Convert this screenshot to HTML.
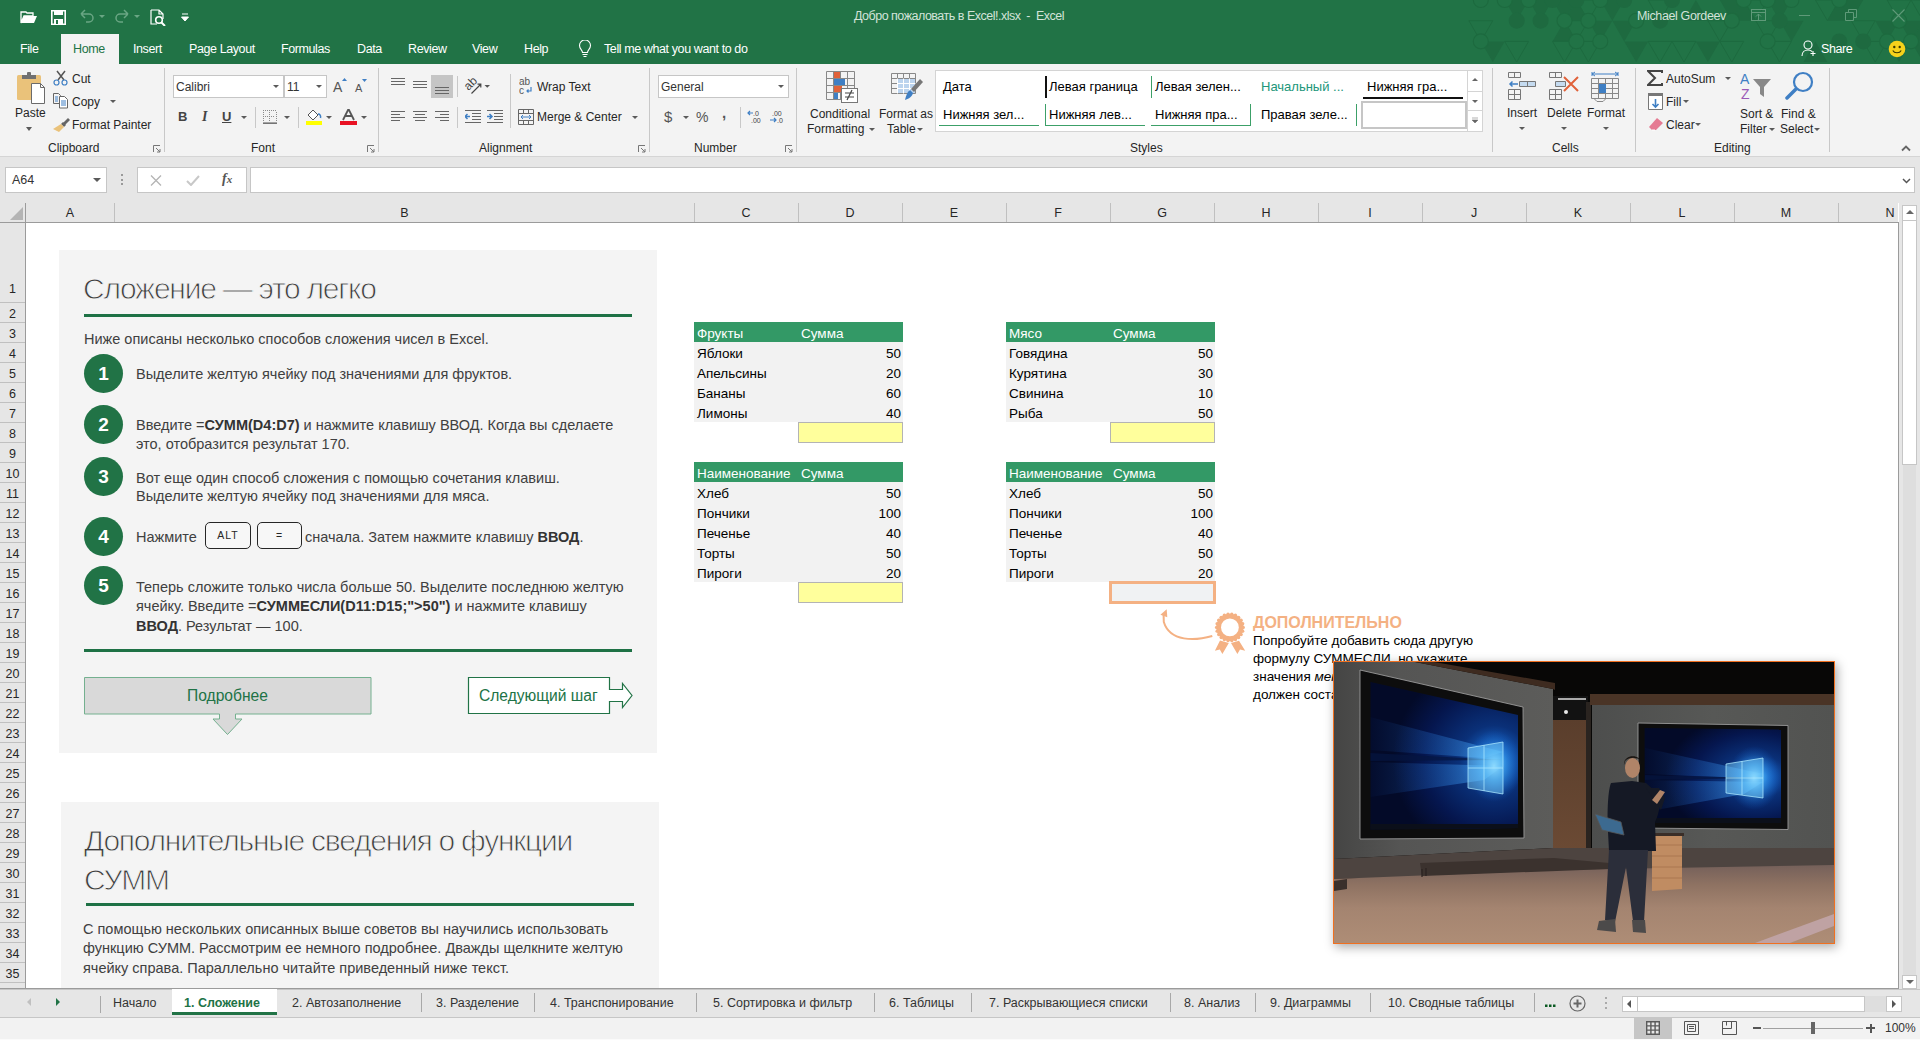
<!DOCTYPE html>
<html><head><meta charset="utf-8">
<style>
*{margin:0;padding:0;box-sizing:border-box}
html,body{width:1920px;height:1040px;overflow:hidden;background:#fff;font-family:"Liberation Sans",sans-serif;font-size:12px;color:#262626}
.a{position:absolute;white-space:nowrap}
#title{position:absolute;left:0;top:0;width:1920px;height:64px;background:#217346;overflow:hidden}
#ribbon{position:absolute;left:0;top:64px;width:1920px;height:93px;background:#f3f3f3;border-bottom:1px solid #d5d5d5}
#fbar{position:absolute;left:0;top:157px;width:1920px;height:46px;background:#e6e6e6}
.w{color:#fff}
.sep{position:absolute;width:1px;background:#c8c8c8}
.gl{position:absolute;top:141px;color:#262626;font-size:12px}
.dd{position:absolute;width:0;height:0;border-left:3px solid transparent;border-right:3px solid transparent;border-top:3px solid #5a5a5a}
.ch{top:206px;text-align:center;font-size:12.5px;color:#262626;height:16px}
.rh{left:0;width:25px;text-align:center;font-size:12.5px;color:#262626;height:18px;line-height:18px;padding-top:2px}
.tt{font-size:30px;letter-spacing:-1.25px;color:#3c3c3c;line-height:34px;-webkit-text-stroke:0.9px #f4f4f4}
.pt{font-size:14.5px;color:#404040;line-height:18px;padding-top:1px}
.pt b{color:#333}
.circ{width:39px;height:39px;border-radius:50%;background:#217346;color:#fff;font-size:19px;font-weight:bold;text-align:center;line-height:40px}
.key{height:27px;border:1.5px solid #262626;border-radius:5px;background:#f7f7f7;font-size:10.5px;text-align:center;line-height:24px;color:#262626;letter-spacing:1px}
.btxt{font-size:15.6px;color:#217346;line-height:20px}
.cl{font-size:13.5px;line-height:20px;color:#000;padding-top:2px}
.tab{top:996px;font-size:12.5px;color:#333;line-height:15px}
.box{position:absolute;background:#fff;border:1px solid #c6c6c6}
</style></head><body>
<div id="title">
<svg class="a" style="left:1430px;top:0" width="490" height="62" viewBox="0 0 490 62"><path d="M74.7 0.0L98.6 0.0L86.7 20.7Z" fill="#1e6a40"/><path d="M98.6 0.0L122.5 0.0L110.6 20.7Z" fill="#1e6a40"/><path d="M122.5 0.0L146.4 0.0L134.5 20.7Z" fill="#1e6a40"/><path d="M134.5 20.7L146.4 0.0L158.4 20.7Z" fill="#1e6a40"/><path d="M146.4 0.0L170.3 0.0L158.4 20.7Z" fill="none" stroke="#1d6a3f" stroke-width="1"/><path d="M170.3 0.0L194.2 0.0L182.3 20.7Z" fill="#1e6a40"/><path d="M218.1 0.0L242.0 0.0L230.1 20.7Z" fill="none" stroke="#1d6a3f" stroke-width="1"/><path d="M254.0 20.7L265.9 0.0L277.9 20.7Z" fill="#1e6a40"/><path d="M289.8 0.0L313.7 0.0L301.8 20.7Z" fill="#1e6a40"/><path d="M301.8 20.7L313.7 0.0L325.7 20.7Z" fill="#1e6a40"/><path d="M313.7 0.0L337.6 0.0L325.7 20.7Z" fill="none" stroke="#1d6a3f" stroke-width="1"/><path d="M337.6 0.0L361.5 0.0L349.6 20.7Z" fill="#1e6a40"/><path d="M385.4 0.0L409.3 0.0L397.4 20.7Z" fill="none" stroke="#1d6a3f" stroke-width="1"/><path d="M397.4 20.7L409.3 0.0L421.3 20.7Z" fill="#1e6a40"/><path d="M409.3 0.0L433.2 0.0L421.3 20.7Z" fill="#1e6a40"/><path d="M457.1 0.0L481.0 0.0L469.1 20.7Z" fill="none" stroke="#1d6a3f" stroke-width="1"/><path d="M481.0 0.0L504.9 0.0L493.0 20.7Z" fill="none" stroke="#1d6a3f" stroke-width="1"/><path d="M38.9 20.7L62.8 20.7L50.8 41.4Z" fill="none" stroke="#1d6a3f" stroke-width="1"/><path d="M122.5 41.4L134.5 20.7L146.4 41.4Z" fill="#1e6a40"/><path d="M134.5 20.7L158.4 20.7L146.4 41.4Z" fill="none" stroke="#1d6a3f" stroke-width="1"/><path d="M158.4 20.7L182.3 20.7L170.3 41.4Z" fill="#1e6a40"/><path d="M182.3 20.7L206.2 20.7L194.2 41.4Z" fill="#1e6a40"/><path d="M277.9 20.7L301.8 20.7L289.8 41.4Z" fill="none" stroke="#1d6a3f" stroke-width="1"/><path d="M325.7 20.7L349.6 20.7L337.6 41.4Z" fill="none" stroke="#1d6a3f" stroke-width="1"/><path d="M349.6 20.7L373.5 20.7L361.5 41.4Z" fill="#1e6a40"/><path d="M421.3 20.7L445.2 20.7L433.2 41.4Z" fill="none" stroke="#1d6a3f" stroke-width="1"/><path d="M445.2 20.7L469.1 20.7L457.1 41.4Z" fill="#1e6a40"/><path d="M469.1 20.7L493.0 20.7L481.0 41.4Z" fill="#1e6a40"/><path d="M481.0 41.4L493.0 20.7L504.9 41.4Z" fill="#1e6a40"/><path d="M493.0 20.7L516.9 20.7L504.9 41.4Z" fill="#1e6a40"/><path d="M50.8 41.4L74.7 41.4L62.8 62.1Z" fill="#1e6a40"/><path d="M74.7 41.4L98.6 41.4L86.7 62.1Z" fill="none" stroke="#1d6a3f" stroke-width="1"/><path d="M122.5 41.4L146.4 41.4L134.5 62.1Z" fill="none" stroke="#1d6a3f" stroke-width="1"/><path d="M146.4 41.4L170.3 41.4L158.4 62.1Z" fill="none" stroke="#1d6a3f" stroke-width="1"/><path d="M194.2 41.4L218.1 41.4L206.2 62.1Z" fill="#1e6a40"/><path d="M218.1 41.4L242.0 41.4L230.1 62.1Z" fill="none" stroke="#1d6a3f" stroke-width="1"/><path d="M242.0 41.4L265.9 41.4L254.0 62.1Z" fill="none" stroke="#1d6a3f" stroke-width="1"/><path d="M265.9 41.4L289.8 41.4L277.9 62.1Z" fill="#1e6a40"/><path d="M289.8 41.4L313.7 41.4L301.8 62.1Z" fill="none" stroke="#1d6a3f" stroke-width="1"/><path d="M337.6 41.4L361.5 41.4L349.6 62.1Z" fill="none" stroke="#1d6a3f" stroke-width="1"/><path d="M373.5 62.1L385.4 41.4L397.4 62.1Z" fill="#1e6a40"/><path d="M433.2 41.4L457.1 41.4L445.2 62.1Z" fill="none" stroke="#1d6a3f" stroke-width="1"/><path d="M457.1 41.4L481.0 41.4L469.1 62.1Z" fill="#1e6a40"/><path d="M481.0 41.4L504.9 41.4L493.0 62.1Z" fill="#1e6a40"/><path d="M493.0 62.1L504.9 41.4L516.9 62.1Z" fill="#1e6a40"/><circle cx="50.8" cy="0.0" r="7.5" fill="#217346" stroke="#1d6a3f" stroke-width="1.1"/><circle cx="74.7" cy="0.0" r="7.5" fill="#217346" stroke="#1d6a3f" stroke-width="1.1"/><circle cx="98.6" cy="0.0" r="7.5" fill="#217346" stroke="#1d6a3f" stroke-width="1.1"/><circle cx="122.5" cy="0.0" r="8" fill="#1e6a40"/><circle cx="146.4" cy="0.0" r="8" fill="#1e6a40"/><circle cx="170.3" cy="0.0" r="7.5" fill="#217346" stroke="#1d6a3f" stroke-width="1.1"/><circle cx="194.2" cy="0.0" r="8" fill="#1e6a40"/><circle cx="242.0" cy="0.0" r="8" fill="#1e6a40"/><circle cx="313.7" cy="0.0" r="7.5" fill="#217346" stroke="#1d6a3f" stroke-width="1.1"/><circle cx="337.6" cy="0.0" r="7.5" fill="#217346" stroke="#1d6a3f" stroke-width="1.1"/><circle cx="361.5" cy="0.0" r="7.5" fill="#217346" stroke="#1d6a3f" stroke-width="1.1"/><circle cx="409.3" cy="0.0" r="7.5" fill="#217346" stroke="#1d6a3f" stroke-width="1.1"/><circle cx="86.7" cy="20.7" r="8" fill="#1e6a40"/><circle cx="110.6" cy="20.7" r="8" fill="#1e6a40"/><circle cx="134.5" cy="20.7" r="7.5" fill="#217346" stroke="#1d6a3f" stroke-width="1.1"/><circle cx="158.4" cy="20.7" r="7.5" fill="#217346" stroke="#1d6a3f" stroke-width="1.1"/><circle cx="206.2" cy="20.7" r="7.5" fill="#217346" stroke="#1d6a3f" stroke-width="1.1"/><circle cx="230.1" cy="20.7" r="8" fill="#1e6a40"/><circle cx="301.8" cy="20.7" r="7.5" fill="#217346" stroke="#1d6a3f" stroke-width="1.1"/><circle cx="349.6" cy="20.7" r="8" fill="#1e6a40"/><circle cx="469.1" cy="20.7" r="7.5" fill="#217346" stroke="#1d6a3f" stroke-width="1.1"/><circle cx="50.8" cy="41.4" r="7.5" fill="#217346" stroke="#1d6a3f" stroke-width="1.1"/><circle cx="146.4" cy="41.4" r="7.5" fill="#217346" stroke="#1d6a3f" stroke-width="1.1"/><circle cx="170.3" cy="41.4" r="7.5" fill="#217346" stroke="#1d6a3f" stroke-width="1.1"/><circle cx="337.6" cy="41.4" r="7.5" fill="#217346" stroke="#1d6a3f" stroke-width="1.1"/><circle cx="409.3" cy="41.4" r="8" fill="#1e6a40"/><circle cx="433.2" cy="41.4" r="8" fill="#1e6a40"/><circle cx="457.1" cy="41.4" r="7.5" fill="#217346" stroke="#1d6a3f" stroke-width="1.1"/><circle cx="481.0" cy="41.4" r="7.5" fill="#217346" stroke="#1d6a3f" stroke-width="1.1"/></svg>
<!-- QAT icons -->
<svg class="a" style="left:20px;top:9px" width="18" height="16" viewBox="0 0 18 16"><path d="M1 3h5l1 1h6v3H4L1 14Z" fill="none" stroke="#fff" stroke-width="1.3"/><path d="M4 7h13l-3 7H1Z" fill="#fff"/></svg>
<svg class="a" style="left:51px;top:10px" width="15" height="15" viewBox="0 0 15 15"><path d="M0.8 0.8h13.4v13.4H0.8Z" fill="none" stroke="#fff" stroke-width="1.6"/><rect x="3" y="1" width="9" height="4" fill="#fff"/><rect x="3" y="9" width="9" height="5" fill="#fff"/><rect x="5" y="10" width="2" height="4" fill="#217346"/></svg>
<svg class="a" style="left:79px;top:9px" width="26" height="15" viewBox="0 0 26 15"><path d="M2 5h8a4 4 0 0 1 0 8H7M2 5l4-4M2 5l4 4" fill="none" stroke="#6aa684" stroke-width="1.5"/><path d="M20 6h6l-3 3Z" fill="#6aa684"/></svg>
<svg class="a" style="left:114px;top:9px" width="26" height="15" viewBox="0 0 26 15"><path d="M14 5H6a4 4 0 0 0 0 8h3M14 5l-4-4M14 5l-4 4" fill="none" stroke="#6aa684" stroke-width="1.5"/><path d="M20 6h6l-3 3Z" fill="#6aa684"/></svg>
<svg class="a" style="left:150px;top:9px" width="17" height="17" viewBox="0 0 17 17"><path d="M1 1h8l4 4v5M9 1v4h4M1 1v14h6" fill="none" stroke="#fff" stroke-width="1.2"/><circle cx="9" cy="11" r="3.3" fill="none" stroke="#fff" stroke-width="1.6"/><path d="M11 13l4 4" stroke="#fff" stroke-width="2"/></svg>
<svg class="a" style="left:181px;top:13px" width="8" height="8" viewBox="0 0 8 8"><path d="M1 1h6M0.5 4h7L4 8Z" fill="#fff" stroke="#fff" stroke-width="1"/></svg>
<div class="a" style="left:854px;top:9px;color:#d3e3d9;font-size:12.5px;letter-spacing:-0.5px">Добро пожаловать в Excel!.xlsx&nbsp; -&nbsp; Excel</div>
<div class="a" style="left:1637px;top:9px;color:#d3e3d9;font-size:12.5px;letter-spacing:-0.37px">Michael Gordeev</div>
<svg class="a" style="left:1751px;top:9px" width="15" height="13" viewBox="0 0 15 13"><rect x="0.5" y="0.5" width="14" height="11" fill="none" stroke="#5f9a79"/><path d="M0.5 3.5h14M7.5 11V5M5 7.5l2.5-2.5 2.5 2.5" fill="none" stroke="#5f9a79"/></svg>
<div class="a" style="left:1799px;top:15px;width:11px;height:1px;background:#5f9a79"></div>
<svg class="a" style="left:1845px;top:9px" width="12" height="12" viewBox="0 0 12 12"><path d="M0.5 3.5h8v8h-8ZM3.5 3.5v-3h8v8h-3" fill="none" stroke="#5f9a79"/></svg>
<svg class="a" style="left:1892px;top:9px" width="13" height="13" viewBox="0 0 13 13"><path d="M0.5 0.5l12 12M12.5 0.5l-12 12" stroke="#5f9a79" stroke-width="1.1"/></svg>
<!-- tabs -->
<div class="a w" style="left:20px;top:42px;font-size:12.5px;letter-spacing:-0.4px">File</div>
<div class="a" style="left:61px;top:34px;width:58px;height:30px;background:#f3f3f3"></div>
<div class="a" style="left:73px;top:42px;font-size:12.5px;letter-spacing:-0.4px;color:#217346">Home</div>
<div class="a w" style="left:133px;top:42px;font-size:12.5px;letter-spacing:-0.4px">Insert</div>
<div class="a w" style="left:189px;top:42px;font-size:12.5px;letter-spacing:-0.4px">Page Layout</div>
<div class="a w" style="left:281px;top:42px;font-size:12.5px;letter-spacing:-0.4px">Formulas</div>
<div class="a w" style="left:357px;top:42px;font-size:12.5px;letter-spacing:-0.4px">Data</div>
<div class="a w" style="left:408px;top:42px;font-size:12.5px;letter-spacing:-0.4px">Review</div>
<div class="a w" style="left:472px;top:42px;font-size:12.5px;letter-spacing:-0.4px">View</div>
<div class="a w" style="left:524px;top:42px;font-size:12.5px;letter-spacing:-0.4px">Help</div>
<svg class="a" style="left:578px;top:40px" width="14" height="18" viewBox="0 0 14 18"><path d="M4.5 12.5C4.5 10 1.5 9 1.5 5.5a5.5 5.5 0 0 1 11 0c0 3.5-3 4.5-3 7Z M4.5 14.5h5M5.5 16.5h3" fill="none" stroke="#fff" stroke-width="1.1"/></svg>
<div class="a w" style="left:604px;top:42px;font-size:12.5px;letter-spacing:-0.4px">Tell me what you want to do</div>
<svg class="a" style="left:1801px;top:40px" width="16" height="17" viewBox="0 0 16 17"><circle cx="7" cy="5" r="4" fill="none" stroke="#fff" stroke-width="1.1"/><path d="M1 16c0-4 3-6 6-6 2 0 3 .5 4 1.5M12 11v5M9.5 13.5h5" fill="none" stroke="#fff" stroke-width="1.1"/></svg>
<div class="a w" style="left:1821px;top:42px;font-size:12.5px;letter-spacing:-0.4px">Share</div>
<svg class="a" style="left:1888px;top:40px" width="18" height="18" viewBox="0 0 18 18"><circle cx="9" cy="9" r="8.3" fill="#f6d21b"/><circle cx="6.3" cy="7" r="1.2" fill="#3a3a00"/><circle cx="11.7" cy="7" r="1.2" fill="#3a3a00"/><path d="M4.8 10.5c1.5 3 6.9 3 8.4 0" fill="none" stroke="#3a3a00" stroke-width="1.1"/></svg>
</div>
<div id="ribbon">
<!-- Clipboard -->
<svg class="a" style="left:16px;top:8px" width="30" height="32" viewBox="0 0 30 32"><rect x="1" y="3" width="24" height="25" rx="1.5" fill="#eac27a"/><path d="M6 3h14v4H6Z" fill="#707070"/><rect x="11" y="0" width="4" height="4" rx="1" fill="#707070"/><path d="M15.5 11.5h9l4 4v16h-13Z" fill="#fff" stroke="#6b6b6b"/><path d="M24.5 11.5v4h4" fill="none" stroke="#6b6b6b"/></svg>
<div class="a" style="left:15px;top:42px">Paste</div>
<div class="dd" style="left:26px;top:63px;border-width:4px 3px 0"></div>
<svg class="a" style="left:53px;top:6px" width="16" height="16" viewBox="0 0 16 16"><path d="M4 1l7 9M12 1L5 10" stroke="#555" stroke-width="1.5"/><circle cx="3.5" cy="12.5" r="2.5" fill="none" stroke="#3f7fc4" stroke-width="1.2"/><circle cx="11.5" cy="12.5" r="2.5" fill="none" stroke="#3f7fc4" stroke-width="1.2"/></svg>
<div class="a" style="left:72px;top:8px">Cut</div>
<svg class="a" style="left:53px;top:29px" width="16" height="16" viewBox="0 0 16 16"><path d="M0.5 0.5h5l2 2v3M0.5 0.5v10h6" fill="none" stroke="#666"/><path d="M6.5 3.5h5l3 3v8.5h-8Z" fill="#fff" stroke="#666"/><path d="M2 4h3M2 6h3M2 8h3M8 8h5M8 10h5M8 12h5" stroke="#3f7fc4"/></svg>
<div class="a" style="left:72px;top:31px">Copy</div>
<div class="dd" style="left:110px;top:36px"></div>
<svg class="a" style="left:53px;top:53px" width="17" height="15" viewBox="0 0 17 15"><path d="M10 6l5-5 2 2-5 5Z" fill="#666"/><path d="M10 5l3 3-2 2-3-3Z" fill="#666"/><path d="M8 7l3 3-5 5-6-3Z" fill="#eac27a"/></svg>
<div class="a" style="left:72px;top:54px">Format Painter</div>
<div class="a" style="left:48px;top:77px">Clipboard</div>
<svg class="a" style="left:153px;top:81px" width="8" height="8" viewBox="0 0 8 8"><path d="M0.5 7V0.5H7" fill="none" stroke="#777"/><path d="M3 3l4 4M7 4v3H4" fill="none" stroke="#777"/></svg>
<div class="sep" style="left:164px;top:4px;height:84px"></div>
<!-- Font -->
<div class="box" style="left:173px;top:11px;width:111px;height:23px"></div>
<div class="a" style="left:176px;top:16px;color:#333">Calibri</div>
<div class="dd" style="left:273px;top:21px"></div>
<div class="box" style="left:284px;top:11px;width:43px;height:23px"></div>
<div class="a" style="left:287px;top:16px;color:#333">11</div>
<div class="dd" style="left:316px;top:21px"></div>
<svg class="a" style="left:332px;top:78px;top:14px" width="40" height="16" viewBox="0 0 40 16"><text x="1" y="14" font-family="Liberation Sans" font-size="14" fill="#555">A</text><path d="M10 3l2.5-3 2.5 3Z" fill="#3f7fc4"/><text x="23" y="14" font-family="Liberation Sans" font-size="11" fill="#555">A</text><path d="M30 1h5l-2.5 3Z" fill="#3f7fc4"/></svg>
<div class="a" style="left:178px;top:45px;font-weight:bold;font-size:13px;color:#444">B</div>
<div class="a" style="left:202px;top:45px;font-style:italic;font-weight:bold;font-size:14px;color:#444;font-family:'Liberation Serif'">I</div>
<div class="a" style="left:222px;top:45px;font-size:13px;color:#444;text-decoration:underline;font-weight:bold">U</div>
<div class="dd" style="left:241px;top:52px"></div>
<div class="sep" style="left:255px;top:43px;height:21px"></div>
<svg class="a" style="left:263px;top:46px" width="14" height="14" viewBox="0 0 14 14"><g fill="#8a8a8a"><rect x="0" y="0" width="1" height="1"/><rect x="2" y="0" width="1" height="1"/><rect x="4" y="0" width="1" height="1"/><rect x="6" y="0" width="1" height="1"/><rect x="8" y="0" width="1" height="1"/><rect x="10" y="0" width="1" height="1"/><rect x="12" y="0" width="1" height="1"/><rect x="0" y="2" width="1" height="1"/><rect x="0" y="4" width="1" height="1"/><rect x="0" y="6" width="1" height="1"/><rect x="0" y="8" width="1" height="1"/><rect x="0" y="10" width="1" height="1"/><rect x="13" y="2" width="1" height="1"/><rect x="13" y="4" width="1" height="1"/><rect x="13" y="6" width="1" height="1"/><rect x="13" y="8" width="1" height="1"/><rect x="13" y="10" width="1" height="1"/><rect x="2" y="6" width="1" height="1"/><rect x="4" y="6" width="1" height="1"/><rect x="8" y="6" width="1" height="1"/><rect x="10" y="6" width="1" height="1"/><rect x="6" y="2" width="1" height="1"/><rect x="6" y="4" width="1" height="1"/><rect x="6" y="8" width="1" height="1"/><rect x="6" y="10" width="1" height="1"/><rect x="6" y="6" width="1" height="1"/></g><rect x="0" y="12.5" width="14" height="1.3" fill="#555"/></svg>
<div class="dd" style="left:284px;top:52px"></div>
<div class="sep" style="left:298px;top:43px;height:21px"></div>
<svg class="a" style="left:305px;top:45px" width="18" height="16" viewBox="0 0 18 16"><path d="M3 6l5-5 5 5-5 5Z" fill="#fff" stroke="#555"/><path d="M13 5c2 0 3 1.5 2.5 4" fill="none" stroke="#3f7fc4" stroke-width="1.5"/><rect x="1" y="12" width="16" height="4" fill="#ffff00"/></svg>
<div class="dd" style="left:326px;top:52px"></div>
<svg class="a" style="left:340px;top:45px" width="17" height="16" viewBox="0 0 17 16"><path d="M3 11L8.5 0h0L14 11M5.5 7h6" fill="none" stroke="#555" stroke-width="1.8"/><rect x="0" y="12" width="17" height="4" fill="#e81123"/></svg>
<div class="dd" style="left:361px;top:52px"></div>
<div class="a" style="left:251px;top:77px">Font</div>
<svg class="a" style="left:367px;top:81px" width="8" height="8" viewBox="0 0 8 8"><path d="M0.5 7V0.5H7" fill="none" stroke="#777"/><path d="M3 3l4 4M7 4v3H4" fill="none" stroke="#777"/></svg>
<div class="sep" style="left:378px;top:4px;height:84px"></div>
<!-- Alignment -->
<svg class="a" style="left:391px;top:14px" width="14" height="8"><path d="M0 0.5h14M0 3.5h14M0 6.5h14" stroke="#666"/></svg>
<svg class="a" style="left:413px;top:17px" width="14" height="8"><path d="M0 0.5h14M0 3.5h14M0 6.5h14" stroke="#666"/></svg>
<div class="a" style="left:431px;top:11px;width:22px;height:23px;background:#c5c5c5"></div>
<svg class="a" style="left:435px;top:23px" width="14" height="8"><path d="M0 0.5h14M0 3.5h14M0 6.5h14" stroke="#666"/></svg>
<div class="sep" style="left:457px;top:12px;height:21px"></div>
<svg class="a" style="left:464px;top:12px" width="30" height="20" viewBox="0 0 30 20"><g transform="translate(-1 -1) rotate(-45 7.5 8.5)"><text x="7.5" y="12.5" text-anchor="middle" font-family="Liberation Sans" font-size="12" fill="#444">ab</text></g><path d="M7.5 17.5L16.5 8.5M13.5 8.2h3.3v3.3" fill="none" stroke="#444" stroke-width="1.2"/><path d="M20.5 9h5.5l-2.75 2.75Z" fill="#555"/></svg>
<div class="sep" style="left:510px;top:10px;height:54px"></div>
<svg class="a" style="left:519px;top:13px" width="14" height="18" viewBox="0 0 14 18"><text x="0" y="8" font-family="Liberation Sans" font-size="10" fill="#555">ab</text><text x="0" y="17" font-family="Liberation Sans" font-size="10" fill="#555">c</text><path d="M12 10v4H8M9.5 12.5L8 14l1.5 1.5" fill="none" stroke="#3f7fc4" stroke-width="1.2"/></svg>
<div class="a" style="left:537px;top:16px">Wrap Text</div>
<svg class="a" style="left:391px;top:47px" width="14" height="12"><path d="M0 0.5h14M0 3.5h9M0 6.5h14M0 9.5h9" stroke="#666"/></svg>
<svg class="a" style="left:413px;top:47px" width="14" height="12"><path d="M0 0.5h14M2 3.5h10M0 6.5h14M2 9.5h10" stroke="#666"/></svg>
<svg class="a" style="left:435px;top:47px" width="14" height="12"><path d="M0 0.5h14M5 3.5h9M0 6.5h14M5 9.5h9" stroke="#666"/></svg>
<div class="sep" style="left:457px;top:43px;height:21px"></div>
<svg class="a" style="left:465px;top:46px" width="16" height="13"><path d="M0 0.5h16M7 3.5h9M7 6.5h9M0 12.5h16M7 9.5h9" stroke="#666"/><path d="M5 6.5H0M2.5 4l-2.5 2.5 2.5 2.5" fill="none" stroke="#3f7fc4" stroke-width="1.5"/></svg>
<svg class="a" style="left:487px;top:46px" width="16" height="13"><path d="M0 0.5h16M7 3.5h9M7 6.5h9M0 12.5h16M7 9.5h9" stroke="#666"/><path d="M0 6.5h5M2.5 4l2.5 2.5-2.5 2.5" fill="none" stroke="#3f7fc4" stroke-width="1.5"/></svg>
<svg class="a" style="left:518px;top:45px" width="16" height="16" viewBox="0 0 16 16"><path d="M0.5 0.5h15v15h-15ZM0.5 4.5h15M0.5 11.5h15M5.5 0.5v4M10.5 0.5v4M5.5 11.5v4M10.5 11.5v4" fill="none" stroke="#666"/><path d="M3 8h10M5 6l-2 2 2 2M11 6l2 2-2 2" fill="none" stroke="#3f7fc4"/></svg>
<div class="a" style="left:537px;top:46px">Merge &amp; Center</div>
<div class="dd" style="left:632px;top:52px"></div>
<div class="a" style="left:479px;top:77px">Alignment</div>
<svg class="a" style="left:638px;top:81px" width="8" height="8" viewBox="0 0 8 8"><path d="M0.5 7V0.5H7" fill="none" stroke="#777"/><path d="M3 3l4 4M7 4v3H4" fill="none" stroke="#777"/></svg>
<div class="sep" style="left:649px;top:4px;height:84px"></div>
<!-- Number -->
<div class="box" style="left:658px;top:11px;width:131px;height:23px"></div>
<div class="a" style="left:661px;top:16px;color:#333">General</div>
<div class="dd" style="left:778px;top:21px"></div>
<div class="a" style="left:664px;top:44px;font-size:15px;color:#555">$</div>
<div class="dd" style="left:683px;top:52px"></div>
<div class="a" style="left:696px;top:45px;font-size:14px;color:#555">%</div>
<div class="a" style="left:722px;top:40px;font-size:15px;color:#555;font-weight:bold">,</div>
<div class="sep" style="left:740px;top:43px;height:21px"></div>
<svg class="a" style="left:747px;top:46px" width="16" height="14" viewBox="0 0 16 14"><text x="6" y="6" font-family="Liberation Sans" font-size="7" fill="#444">.0</text><text x="4" y="13" font-family="Liberation Sans" font-size="7" fill="#444">.00</text><path d="M6 3H1M3 1L1 3l2 2" fill="none" stroke="#3f7fc4" stroke-width="1.2"/></svg>
<svg class="a" style="left:769px;top:46px" width="16" height="14" viewBox="0 0 16 14"><text x="3" y="6" font-family="Liberation Sans" font-size="7" fill="#444">.00</text><text x="8" y="13" font-family="Liberation Sans" font-size="7" fill="#444">.0</text><path d="M1 10h6M5 8l2 2-2 2" fill="none" stroke="#3f7fc4" stroke-width="1.2"/></svg>
<div class="a" style="left:694px;top:77px">Number</div>
<svg class="a" style="left:785px;top:81px" width="8" height="8" viewBox="0 0 8 8"><path d="M0.5 7V0.5H7" fill="none" stroke="#777"/><path d="M3 3l4 4M7 4v3H4" fill="none" stroke="#777"/></svg>
<div class="sep" style="left:796px;top:4px;height:84px"></div>
<!-- Styles -->
<svg class="a" style="left:826px;top:7px" width="32" height="32" viewBox="0 0 32 32"><path d="M0.5 0.5h28v28h-28ZM0.5 7.5h28M0.5 14.5h28M0.5 21.5h28M7.5 0.5v28M14.5 0.5v28M21.5 0.5v28" fill="none" stroke="#888"/><rect x="8" y="1" width="6" height="6" fill="#e0623a"/><rect x="8" y="8" width="11" height="6" fill="#3f7fc4"/><rect x="8" y="15" width="8" height="6" fill="#e0623a"/><rect x="8" y="22" width="4" height="6" fill="#3f7fc4"/><rect x="15.5" y="17.5" width="16" height="14" fill="#fff" stroke="#777"/><path d="M19 22h9M19 26h9M26 19l-5 10" stroke="#444" stroke-width="1.2"/></svg>
<div class="a" style="left:810px;top:43px">Conditional</div>
<div class="a" style="left:807px;top:58px">Formatting</div>
<div class="dd" style="left:869px;top:64px"></div>
<svg class="a" style="left:891px;top:9px" width="32" height="30" viewBox="0 0 32 30"><path d="M0.5 0.5h24v20h-24ZM0.5 5.5h24M0.5 10.5h24M0.5 15.5h24M6.5 0.5v20M12.5 0.5v20M18.5 0.5v20" fill="none" stroke="#888"/><rect x="7" y="6" width="17" height="14" fill="#bcd4ee"/><path d="M6.5 5.5v15M12.5 5.5v15M18.5 5.5v15M6.5 10.5h18M6.5 15.5h18" stroke="#fff"/><path d="M29 6l3 3-9 10-3-3Z" fill="#777"/><path d="M19 17l3 3c-1 4-5 6-8 7 1-4 2-8 5-10Z" fill="#3f7fc4"/></svg>
<div class="a" style="left:879px;top:43px">Format as</div>
<div class="a" style="left:887px;top:58px">Table</div>
<div class="dd" style="left:917px;top:64px"></div>
<div class="a" style="left:935px;top:6px;width:548px;height:62px;background:#fff;border:1px solid #d4d4d4"></div>
<div class="a" style="left:1467px;top:6px;width:16px;height:62px;border:1px solid #d4d4d4;background:#fff"></div>
<div class="a" style="left:1467px;top:27px;width:16px;height:1px;background:#d4d4d4"></div>
<div class="a" style="left:1467px;top:46px;width:16px;height:1px;background:#d4d4d4"></div>
<svg class="a" style="left:1471px;top:13px" width="8" height="50" viewBox="0 0 8 50"><path d="M1 4l3-3 3 3Z" fill="#666"/><path d="M1 23h6l-3 3Z" fill="#666"/><path d="M1 41h6M1 43h6l-3 3Z" fill="#666" stroke="#666" stroke-width="0.5"/></svg>
<div class="a" style="left:943px;top:15px;font-size:13px;color:#000">Дата</div>
<div class="a" style="left:1045px;top:12px;width:2px;height:22px;background:#111"></div>
<div class="a" style="left:1049px;top:15px;font-size:13px;color:#000">Левая граница</div>
<div class="a" style="left:1151px;top:12px;width:1px;height:22px;background:#3ca068"></div>
<div class="a" style="left:1155px;top:15px;font-size:13px;color:#000">Левая зелен...</div>
<div class="a" style="left:1261px;top:15px;font-size:13px;color:#21967a">Начальный ...</div>
<div class="a" style="left:1367px;top:15px;font-size:13px;color:#000">Нижняя гра...</div>
<div class="a" style="left:1363px;top:33px;width:100px;height:2px;background:#111"></div>
<div class="a" style="left:943px;top:43px;font-size:13px;color:#000">Нижняя зел...</div>
<div class="a" style="left:939px;top:61px;width:100px;height:1px;background:#3ca068"></div>
<div class="a" style="left:1045px;top:40px;width:1px;height:22px;background:#3ca068"></div>
<div class="a" style="left:1045px;top:61px;width:100px;height:1px;background:#3ca068"></div>
<div class="a" style="left:1049px;top:43px;font-size:13px;color:#000">Нижняя лев...</div>
<div class="a" style="left:1151px;top:61px;width:100px;height:1px;background:#3ca068"></div>
<div class="a" style="left:1250px;top:40px;width:1px;height:22px;background:#3ca068"></div>
<div class="a" style="left:1155px;top:43px;font-size:13px;color:#000">Нижняя пра...</div>
<div class="a" style="left:1261px;top:43px;font-size:13px;color:#000">Правая зеле...</div>
<div class="a" style="left:1356px;top:40px;width:1px;height:22px;background:#3ca068"></div>
<div class="a" style="left:1361px;top:37px;width:106px;height:28px;border:2px solid #c6c6c6"></div>
<div class="a" style="left:1130px;top:77px">Styles</div>
<div class="sep" style="left:1492px;top:4px;height:84px"></div>
<!-- Cells -->
<svg class="a" style="left:1508px;top:8px" width="28" height="28" viewBox="0 0 28 28"><path d="M0.5 0.5h12v5h-12ZM6.5 0.5v5M0.5 17.5h12v10h-12ZM0.5 22.5h12M6.5 17.5v10" fill="none" stroke="#777"/><path d="M11.5 9.5h16v5h-16ZM19.5 9.5v5" fill="#c5dbf0" stroke="#777"/><path d="M10 12H2M4.5 9.5L2 12l2.5 2.5" fill="none" stroke="#3f7fc4" stroke-width="1.5"/></svg>
<div class="a" style="left:1507px;top:42px">Insert</div>
<div class="dd" style="left:1519px;top:63px"></div>
<svg class="a" style="left:1549px;top:8px" width="32" height="28" viewBox="0 0 32 28"><path d="M0.5 0.5h12v5h-12ZM6.5 0.5v5M0.5 17.5h12v10h-12ZM0.5 22.5h12M6.5 17.5v10" fill="none" stroke="#777"/><path d="M6.5 9.5h10v5h-10Z" fill="#c5dbf0" stroke="#777"/><path d="M15 5l14 14M29 5L15 19" stroke="#e0623a" stroke-width="2"/></svg>
<div class="a" style="left:1547px;top:42px">Delete</div>
<div class="dd" style="left:1561px;top:63px"></div>
<svg class="a" style="left:1591px;top:7px" width="30" height="32" viewBox="0 0 30 32"><path d="M1 3h26M1 1v4M27 1v4M4 1l-3 2 3 2M24 1l3 2-3 2" fill="none" stroke="#3f7fc4"/><path d="M0.5 7.5h27v20h-27ZM0.5 12.5h27M0.5 17.5h27M0.5 22.5h27M7.5 7.5v20M14.5 7.5v20M21.5 7.5v20" fill="none" stroke="#888"/><rect x="8" y="13" width="7" height="9" fill="#3f7fc4"/><path d="M3 27.5l3 3h6l3-3" fill="none" stroke="#888"/></svg>
<div class="a" style="left:1587px;top:42px">Format</div>
<div class="dd" style="left:1603px;top:63px"></div>
<div class="a" style="left:1552px;top:77px">Cells</div>
<div class="sep" style="left:1635px;top:4px;height:84px"></div>
<!-- Editing -->
<svg class="a" style="left:1647px;top:6px" width="16" height="16" viewBox="0 0 16 16"><path d="M15 3V1H1l7 7-7 7h14v-2" fill="none" stroke="#444" stroke-width="2"/></svg>
<div class="a" style="left:1666px;top:8px">AutoSum</div>
<div class="dd" style="left:1725px;top:13px"></div>
<svg class="a" style="left:1648px;top:29px" width="15" height="17" viewBox="0 0 15 17"><path d="M0.5 0.5h14v16h-14Z" fill="#fff" stroke="#777"/><rect x="0" y="0" width="15" height="3" fill="#777"/><path d="M7.5 6v8M4.5 11l3 3 3-3" fill="none" stroke="#3f7fc4" stroke-width="1.6"/></svg>
<div class="a" style="left:1666px;top:31px">Fill</div>
<div class="dd" style="left:1683px;top:36px"></div>
<svg class="a" style="left:1648px;top:53px" width="16" height="14" viewBox="0 0 16 14"><path d="M9 1l6 5-7 7H4L1 10Z" fill="#e57b93"/><path d="M4 13h3" stroke="#fff"/></svg>
<div class="a" style="left:1666px;top:54px">Clear</div>
<div class="dd" style="left:1695px;top:59px"></div>
<svg class="a" style="left:1740px;top:7px" width="32" height="30" viewBox="0 0 32 30"><text x="0" y="13" font-family="Liberation Sans" font-size="14" fill="#3f7fc4">A</text><text x="1" y="28" font-family="Liberation Sans" font-size="14" fill="#9b59b6">Z</text><path d="M13 8h18l-7 8v10l-4-3v-7Z" fill="#888"/></svg>
<div class="a" style="left:1740px;top:43px">Sort &amp;</div>
<div class="a" style="left:1740px;top:58px">Filter</div>
<div class="dd" style="left:1769px;top:64px"></div>
<svg class="a" style="left:1785px;top:7px" width="30" height="30" viewBox="0 0 30 30"><circle cx="18" cy="11" r="9" fill="none" stroke="#3f7fc4" stroke-width="2.2"/><path d="M11 18L2 27" stroke="#3f7fc4" stroke-width="3.5" stroke-linecap="round"/></svg>
<div class="a" style="left:1781px;top:43px">Find &amp;</div>
<div class="a" style="left:1780px;top:58px">Select</div>
<div class="dd" style="left:1814px;top:64px"></div>
<div class="a" style="left:1714px;top:77px">Editing</div>
<div class="sep" style="left:1829px;top:4px;height:84px"></div>
<svg class="a" style="left:1900.5px;top:79.5px" width="10" height="8" viewBox="0 0 10 8"><path d="M1 6.5l4-4 4 4" fill="none" stroke="#666" stroke-width="1.8"/></svg>
</div>
<div id="fbar">
<div class="box" style="left:5px;top:10px;width:102px;height:26px"></div>
<div class="a" style="left:12px;top:16px;font-size:12.5px;color:#333">A64</div>
<div class="dd" style="left:93px;top:21px;border-width:4px 4px 0"></div>
<svg class="a" style="left:120px;top:17px" width="4" height="12"><rect x="1" y="0" width="2" height="2" fill="#999"/><rect x="1" y="5" width="2" height="2" fill="#999"/><rect x="1" y="9" width="2" height="2" fill="#999"/></svg>
<div class="box" style="left:137px;top:10px;width:110px;height:26px"></div>
<svg class="a" style="left:150px;top:18px" width="12" height="11"><path d="M1 0.5l10 10M11 0.5l-10 10" stroke="#b4b4b4" stroke-width="1.3"/></svg>
<svg class="a" style="left:186px;top:18px" width="14" height="11"><path d="M1 6l4 4 8-9" fill="none" stroke="#c8c8c8" stroke-width="2"/></svg>
<div class="a" style="left:222px;top:14px;font-family:'Liberation Serif';font-style:italic;font-weight:bold;font-size:14px;color:#555">f<span style="font-size:11px">x</span></div>
<div class="box" style="left:250px;top:10px;width:1665px;height:26px"></div>
<svg class="a" style="left:1902px;top:21px" width="9" height="6"><path d="M1 1l3.5 3.5L8 1" fill="none" stroke="#555" stroke-width="1.5"/></svg>
</div>
<div id="colhdr">
<div class="a" style="left:0;top:203px;width:1898px;height:19px;background:#e6e6e6"></div>
<svg class="a" style="left:10px;top:207px" width="13" height="13"><path d="M13 0V13H0Z" fill="#b4b4b4"/></svg>
<div class="a" style="left:114px;top:203px;width:1px;height:19px;background:#c0c0c0"></div>
<div class="a ch" style="left:25px;width:90px">A</div>
<div class="a" style="left:694px;top:203px;width:1px;height:19px;background:#c0c0c0"></div>
<div class="a ch" style="left:115px;width:579px">B</div>
<div class="a" style="left:798px;top:203px;width:1px;height:19px;background:#c0c0c0"></div>
<div class="a ch" style="left:694px;width:104px">C</div>
<div class="a" style="left:902px;top:203px;width:1px;height:19px;background:#c0c0c0"></div>
<div class="a ch" style="left:798px;width:104px">D</div>
<div class="a" style="left:1006px;top:203px;width:1px;height:19px;background:#c0c0c0"></div>
<div class="a ch" style="left:902px;width:104px">E</div>
<div class="a" style="left:1110px;top:203px;width:1px;height:19px;background:#c0c0c0"></div>
<div class="a ch" style="left:1006px;width:104px">F</div>
<div class="a" style="left:1214px;top:203px;width:1px;height:19px;background:#c0c0c0"></div>
<div class="a ch" style="left:1110px;width:104px">G</div>
<div class="a" style="left:1318px;top:203px;width:1px;height:19px;background:#c0c0c0"></div>
<div class="a ch" style="left:1214px;width:104px">H</div>
<div class="a" style="left:1422px;top:203px;width:1px;height:19px;background:#c0c0c0"></div>
<div class="a ch" style="left:1318px;width:104px">I</div>
<div class="a" style="left:1526px;top:203px;width:1px;height:19px;background:#c0c0c0"></div>
<div class="a ch" style="left:1422px;width:104px">J</div>
<div class="a" style="left:1630px;top:203px;width:1px;height:19px;background:#c0c0c0"></div>
<div class="a ch" style="left:1526px;width:104px">K</div>
<div class="a" style="left:1734px;top:203px;width:1px;height:19px;background:#c0c0c0"></div>
<div class="a ch" style="left:1630px;width:104px">L</div>
<div class="a" style="left:1838px;top:203px;width:1px;height:19px;background:#c0c0c0"></div>
<div class="a ch" style="left:1734px;width:104px">M</div>
<div class="a" style="left:1942px;top:203px;width:1px;height:19px;background:#c0c0c0"></div>
<div class="a ch" style="left:1838px;width:104px">N</div>
<div class="a" style="left:0;top:222px;width:1899px;height:1px;background:#9b9b9b"></div>
</div>
<div id="rowhdr">
<div class="a" style="left:0;top:223px;width:25px;height:766px;background:#e6e6e6"></div>
<div class="a" style="left:0;top:302px;width:25px;height:1px;background:#c0c0c0"></div>
<div class="a rh" style="top:278px">1</div>
<div class="a" style="left:0;top:322px;width:25px;height:1px;background:#c0c0c0"></div>
<div class="a rh" style="top:303px">2</div>
<div class="a" style="left:0;top:342px;width:25px;height:1px;background:#c0c0c0"></div>
<div class="a rh" style="top:323px">3</div>
<div class="a" style="left:0;top:362px;width:25px;height:1px;background:#c0c0c0"></div>
<div class="a rh" style="top:343px">4</div>
<div class="a" style="left:0;top:382px;width:25px;height:1px;background:#c0c0c0"></div>
<div class="a rh" style="top:363px">5</div>
<div class="a" style="left:0;top:402px;width:25px;height:1px;background:#c0c0c0"></div>
<div class="a rh" style="top:383px">6</div>
<div class="a" style="left:0;top:422px;width:25px;height:1px;background:#c0c0c0"></div>
<div class="a rh" style="top:403px">7</div>
<div class="a" style="left:0;top:442px;width:25px;height:1px;background:#c0c0c0"></div>
<div class="a rh" style="top:423px">8</div>
<div class="a" style="left:0;top:462px;width:25px;height:1px;background:#c0c0c0"></div>
<div class="a rh" style="top:443px">9</div>
<div class="a" style="left:0;top:482px;width:25px;height:1px;background:#c0c0c0"></div>
<div class="a rh" style="top:463px">10</div>
<div class="a" style="left:0;top:502px;width:25px;height:1px;background:#c0c0c0"></div>
<div class="a rh" style="top:483px">11</div>
<div class="a" style="left:0;top:522px;width:25px;height:1px;background:#c0c0c0"></div>
<div class="a rh" style="top:503px">12</div>
<div class="a" style="left:0;top:542px;width:25px;height:1px;background:#c0c0c0"></div>
<div class="a rh" style="top:523px">13</div>
<div class="a" style="left:0;top:562px;width:25px;height:1px;background:#c0c0c0"></div>
<div class="a rh" style="top:543px">14</div>
<div class="a" style="left:0;top:582px;width:25px;height:1px;background:#c0c0c0"></div>
<div class="a rh" style="top:563px">15</div>
<div class="a" style="left:0;top:602px;width:25px;height:1px;background:#c0c0c0"></div>
<div class="a rh" style="top:583px">16</div>
<div class="a" style="left:0;top:622px;width:25px;height:1px;background:#c0c0c0"></div>
<div class="a rh" style="top:603px">17</div>
<div class="a" style="left:0;top:642px;width:25px;height:1px;background:#c0c0c0"></div>
<div class="a rh" style="top:623px">18</div>
<div class="a" style="left:0;top:662px;width:25px;height:1px;background:#c0c0c0"></div>
<div class="a rh" style="top:643px">19</div>
<div class="a" style="left:0;top:682px;width:25px;height:1px;background:#c0c0c0"></div>
<div class="a rh" style="top:663px">20</div>
<div class="a" style="left:0;top:702px;width:25px;height:1px;background:#c0c0c0"></div>
<div class="a rh" style="top:683px">21</div>
<div class="a" style="left:0;top:722px;width:25px;height:1px;background:#c0c0c0"></div>
<div class="a rh" style="top:703px">22</div>
<div class="a" style="left:0;top:742px;width:25px;height:1px;background:#c0c0c0"></div>
<div class="a rh" style="top:723px">23</div>
<div class="a" style="left:0;top:762px;width:25px;height:1px;background:#c0c0c0"></div>
<div class="a rh" style="top:743px">24</div>
<div class="a" style="left:0;top:782px;width:25px;height:1px;background:#c0c0c0"></div>
<div class="a rh" style="top:763px">25</div>
<div class="a" style="left:0;top:802px;width:25px;height:1px;background:#c0c0c0"></div>
<div class="a rh" style="top:783px">26</div>
<div class="a" style="left:0;top:822px;width:25px;height:1px;background:#c0c0c0"></div>
<div class="a rh" style="top:803px">27</div>
<div class="a" style="left:0;top:842px;width:25px;height:1px;background:#c0c0c0"></div>
<div class="a rh" style="top:823px">28</div>
<div class="a" style="left:0;top:862px;width:25px;height:1px;background:#c0c0c0"></div>
<div class="a rh" style="top:843px">29</div>
<div class="a" style="left:0;top:882px;width:25px;height:1px;background:#c0c0c0"></div>
<div class="a rh" style="top:863px">30</div>
<div class="a" style="left:0;top:902px;width:25px;height:1px;background:#c0c0c0"></div>
<div class="a rh" style="top:883px">31</div>
<div class="a" style="left:0;top:922px;width:25px;height:1px;background:#c0c0c0"></div>
<div class="a rh" style="top:903px">32</div>
<div class="a" style="left:0;top:942px;width:25px;height:1px;background:#c0c0c0"></div>
<div class="a rh" style="top:923px">33</div>
<div class="a" style="left:0;top:962px;width:25px;height:1px;background:#c0c0c0"></div>
<div class="a rh" style="top:943px">34</div>
<div class="a" style="left:0;top:982px;width:25px;height:1px;background:#c0c0c0"></div>
<div class="a rh" style="top:963px">35</div>
<div class="a rh" style="top:983px">36</div>
<div class="a" style="left:25px;top:203px;width:1px;height:786px;background:#9b9b9b"></div>
</div>
<div id="sheet">
<div class="a" style="left:59px;top:250px;width:598px;height:503px;background:#f4f4f4"></div>
<div class="a tt" style="left:83px;top:272px">Сложение — это легко</div>
<div class="a" style="left:84px;top:314px;width:548px;height:3px;background:#1e7145"></div>
<div class="a pt" style="left:84px;top:329px">Ниже описаны несколько способов сложения чисел в Excel.</div>
<div class="a circ" style="left:84px;top:354.0px">1</div>
<div class="a circ" style="left:84px;top:404.5px">2</div>
<div class="a circ" style="left:84px;top:457.0px">3</div>
<div class="a circ" style="left:84px;top:516.5px">4</div>
<div class="a circ" style="left:84px;top:566.0px">5</div>
<div class="a pt" style="left:136px;top:364px">Выделите желтую ячейку под значениями для фруктов.</div>
<div class="a pt" style="left:136px;top:415px">Введите =<b>СУММ(D4:D7)</b> и нажмите клавишу ВВОД. Когда вы сделаете</div>
<div class="a pt" style="left:136px;top:434px">это, отобразится результат 170.</div>
<div class="a pt" style="left:136px;top:468px">Вот еще один способ сложения с помощью сочетания клавиш.</div>
<div class="a pt" style="left:136px;top:486px">Выделите желтую ячейку под значениями для мяса.</div>
<div class="a pt" style="left:136px;top:577px">Теперь сложите только числа больше 50. Выделите последнюю желтую</div>
<div class="a pt" style="left:136px;top:596px">ячейку. Введите =<b>СУММЕСЛИ(D11:D15;"&gt;50")</b> и нажмите клавишу</div>
<div class="a pt" style="left:136px;top:616px"><b>ВВОД</b>. Результат — 100.</div>
<div class="a pt" style="left:136px;top:527px">Нажмите</div>
<div class="a key" style="left:205px;top:522px;width:46px">ALT</div>
<div class="a key" style="left:257px;top:522px;width:45px">=</div>
<div class="a pt" style="left:305px;top:527px">сначала. Затем нажмите клавишу <b>ВВОД</b>.</div>
<div class="a" style="left:84px;top:649px;width:548px;height:3px;background:#1e7145"></div>
<svg class="a" style="left:83px;top:676px" width="290" height="60" viewBox="0 0 290 60"><path d="M1.5 1.5h286.5v36.5h-135.5v5h6.5l-14.5 15.5-14.5-15.5h6.5v-5h-135Z" fill="#d9d9d9" stroke="#74b08f" stroke-width="1"/></svg>
<div class="a btxt" style="left:84px;top:686px;width:287px;text-align:center">Подробнее</div>
<svg class="a" style="left:467px;top:676px" width="168" height="40" viewBox="0 0 168 40"><path d="M1.5 1.5h141v12h13v-6l9.5 12-9.5 12v-6h-13v12h-141Z" fill="#fff" stroke="#217346" stroke-width="1.2"/></svg>
<div class="a btxt" style="left:479px;top:686px">Следующий шаг</div>
<div class="a" style="left:61px;top:802px;width:598px;height:187px;background:#f4f4f4"></div>
<div class="a tt" style="left:84px;top:821px;line-height:39px;white-space:normal;width:560px">Дополнительные сведения о функции СУММ</div>
<div class="a" style="left:86px;top:903px;width:548px;height:3px;background:#1e7145"></div>
<div class="a pt" style="left:83px;top:919px">С помощью нескольких описанных выше советов вы научились использовать</div>
<div class="a pt" style="left:83px;top:938px">функцию СУММ. Рассмотрим ее немного подробнее. Дважды щелкните желтую</div>
<div class="a pt" style="left:83px;top:958px">ячейку справа. Параллельно читайте приведенный ниже текст.</div>
<div class="a" style="left:694px;top:322px;width:209px;height:20px;background:#339966"></div>
<div class="a cl" style="left:697px;top:322px;color:#fff">Фрукты</div>
<div class="a cl" style="left:801px;top:322px;color:#fff">Сумма</div>
<div class="a" style="left:694px;top:342px;width:209px;height:80px;background:#f2f2f2"></div>
<div class="a cl" style="left:697px;top:342px">Яблоки</div>
<div class="a cl" style="left:798px;top:342px;width:103px;text-align:right">50</div>
<div class="a cl" style="left:697px;top:362px">Апельсины</div>
<div class="a cl" style="left:798px;top:362px;width:103px;text-align:right">20</div>
<div class="a cl" style="left:697px;top:382px">Бананы</div>
<div class="a cl" style="left:798px;top:382px;width:103px;text-align:right">60</div>
<div class="a cl" style="left:697px;top:402px">Лимоны</div>
<div class="a cl" style="left:798px;top:402px;width:103px;text-align:right">40</div>
<div class="a" style="left:798px;top:422px;width:105px;height:21px;background:#ffff9c;border:1px solid #b4b4b4"></div>
<div class="a" style="left:1006px;top:322px;width:209px;height:20px;background:#339966"></div>
<div class="a cl" style="left:1009px;top:322px;color:#fff">Мясо</div>
<div class="a cl" style="left:1113px;top:322px;color:#fff">Сумма</div>
<div class="a" style="left:1006px;top:342px;width:209px;height:80px;background:#f2f2f2"></div>
<div class="a cl" style="left:1009px;top:342px">Говядина</div>
<div class="a cl" style="left:1110px;top:342px;width:103px;text-align:right">50</div>
<div class="a cl" style="left:1009px;top:362px">Курятина</div>
<div class="a cl" style="left:1110px;top:362px;width:103px;text-align:right">30</div>
<div class="a cl" style="left:1009px;top:382px">Свинина</div>
<div class="a cl" style="left:1110px;top:382px;width:103px;text-align:right">10</div>
<div class="a cl" style="left:1009px;top:402px">Рыба</div>
<div class="a cl" style="left:1110px;top:402px;width:103px;text-align:right">50</div>
<div class="a" style="left:1110px;top:422px;width:105px;height:21px;background:#ffff9c;border:1px solid #b4b4b4"></div>
<div class="a" style="left:694px;top:462px;width:209px;height:20px;background:#339966"></div>
<div class="a cl" style="left:697px;top:462px;color:#fff">Наименование</div>
<div class="a cl" style="left:801px;top:462px;color:#fff">Сумма</div>
<div class="a" style="left:694px;top:482px;width:209px;height:100px;background:#f2f2f2"></div>
<div class="a cl" style="left:697px;top:482px">Хлеб</div>
<div class="a cl" style="left:798px;top:482px;width:103px;text-align:right">50</div>
<div class="a cl" style="left:697px;top:502px">Пончики</div>
<div class="a cl" style="left:798px;top:502px;width:103px;text-align:right">100</div>
<div class="a cl" style="left:697px;top:522px">Печенье</div>
<div class="a cl" style="left:798px;top:522px;width:103px;text-align:right">40</div>
<div class="a cl" style="left:697px;top:542px">Торты</div>
<div class="a cl" style="left:798px;top:542px;width:103px;text-align:right">50</div>
<div class="a cl" style="left:697px;top:562px">Пироги</div>
<div class="a cl" style="left:798px;top:562px;width:103px;text-align:right">20</div>
<div class="a" style="left:798px;top:582px;width:105px;height:21px;background:#ffff9c;border:1px solid #b4b4b4"></div>
<div class="a" style="left:1006px;top:462px;width:209px;height:20px;background:#339966"></div>
<div class="a cl" style="left:1009px;top:462px;color:#fff">Наименование</div>
<div class="a cl" style="left:1113px;top:462px;color:#fff">Сумма</div>
<div class="a" style="left:1006px;top:482px;width:209px;height:100px;background:#f2f2f2"></div>
<div class="a cl" style="left:1009px;top:482px">Хлеб</div>
<div class="a cl" style="left:1110px;top:482px;width:103px;text-align:right">50</div>
<div class="a cl" style="left:1009px;top:502px">Пончики</div>
<div class="a cl" style="left:1110px;top:502px;width:103px;text-align:right">100</div>
<div class="a cl" style="left:1009px;top:522px">Печенье</div>
<div class="a cl" style="left:1110px;top:522px;width:103px;text-align:right">40</div>
<div class="a cl" style="left:1009px;top:542px">Торты</div>
<div class="a cl" style="left:1110px;top:542px;width:103px;text-align:right">50</div>
<div class="a cl" style="left:1009px;top:562px">Пироги</div>
<div class="a cl" style="left:1110px;top:562px;width:103px;text-align:right">20</div>
<div class="a" style="left:1109px;top:581px;width:107px;height:23px;background:#f0f2f3;border:3px solid #f4b183"></div>
<svg class="a" style="left:1150px;top:600px" width="110" height="60" viewBox="0 0 110 60"><g fill="#f4b183"><path d="M62.3 36C45 41 20 42 13.8 22L13.6 15" fill="none" stroke="#f4b183" stroke-width="2"/><path d="M10.4 14.7L16.7 9.2L17.3 17.3Z"/>
<circle cx="79.9" cy="27.4" r="13.6"/><circle cx="93.20" cy="27.40" r="1.7"/><circle cx="92.66" cy="31.15" r="1.7"/><circle cx="91.09" cy="34.59" r="1.7"/><circle cx="88.61" cy="37.45" r="1.7"/><circle cx="85.43" cy="39.50" r="1.7"/><circle cx="81.79" cy="40.56" r="1.7"/><circle cx="78.01" cy="40.56" r="1.7"/><circle cx="74.37" cy="39.50" r="1.7"/><circle cx="71.19" cy="37.45" r="1.7"/><circle cx="68.71" cy="34.59" r="1.7"/><circle cx="67.14" cy="31.15" r="1.7"/><circle cx="66.60" cy="27.40" r="1.7"/><circle cx="67.14" cy="23.65" r="1.7"/><circle cx="68.71" cy="20.21" r="1.7"/><circle cx="71.19" cy="17.35" r="1.7"/><circle cx="74.37" cy="15.30" r="1.7"/><circle cx="78.01" cy="14.24" r="1.7"/><circle cx="81.79" cy="14.24" r="1.7"/><circle cx="85.43" cy="15.30" r="1.7"/><circle cx="88.61" cy="17.35" r="1.7"/><circle cx="91.09" cy="20.21" r="1.7"/><circle cx="92.66" cy="23.65" r="1.7"/><circle cx="79.9" cy="27.4" r="8.9" fill="#fff"/>
<path d="M70 40.4L78.8 42.9L72.4 54L69.8 49.6L64.9 50.8Z"/><path d="M81 42.9L89 40.7L95.2 50.8L90 49.6L87.4 54Z"/></g></svg>
<div class="a" style="left:1253px;top:614px;font-weight:bold;font-size:16px;color:#f4b183">ДОПОЛНИТЕЛЬНО</div>
<div class="a cl" style="left:1253px;top:629px">Попробуйте добавить сюда другую</div>
<div class="a cl" style="left:1253px;top:647px">формулу СУММЕСЛИ, но укажите</div>
<div class="a cl" style="left:1253px;top:665px">значения <i>меньше</i> 50. Результат</div>
<div class="a cl" style="left:1253px;top:683px">должен составить 120.</div>
<div id="video" class="a" style="left:1333px;top:661px;width:502px;height:283px;border:1px solid #f07020;background:#3a3634;box-shadow:2px 3px 10px rgba(0,0,0,.35);overflow:hidden">
<svg width="500" height="281" viewBox="0 0 500 281" style="display:block">
<defs>
<linearGradient id="vwall" x1="0" x2="1" y1="0" y2="0"><stop offset="0" stop-color="#454544"/><stop offset="0.3" stop-color="#555554"/><stop offset="1" stop-color="#5c5c5a"/></linearGradient>
<linearGradient id="vwall2" x1="0" x2="1"><stop offset="0" stop-color="#4d4e4d"/><stop offset="0.5" stop-color="#575856"/><stop offset="1" stop-color="#525351"/></linearGradient>
<radialGradient id="vscr" cx="0.8" cy="0.52" r="0.62" fx="0.82" fy="0.52"><stop offset="0" stop-color="#3aa0f0"/><stop offset="0.12" stop-color="#1660c0"/><stop offset="0.35" stop-color="#0a3078"/><stop offset="0.7" stop-color="#05164e"/><stop offset="1" stop-color="#030a28"/></radialGradient>
<radialGradient id="vglow" cx="0.5" cy="0.5" r="0.5"><stop offset="0" stop-color="#9fe0ff" stop-opacity="0.95"/><stop offset="0.4" stop-color="#3fa6f0" stop-opacity="0.6"/><stop offset="1" stop-color="#1060d0" stop-opacity="0"/></radialGradient>
<linearGradient id="vray" x1="1" x2="0"><stop offset="0" stop-color="#55b8ff" stop-opacity="0.85"/><stop offset="0.5" stop-color="#2a7ad8" stop-opacity="0.45"/><stop offset="1" stop-color="#1550b0" stop-opacity="0.05"/></linearGradient>
<linearGradient id="vfloor" x1="0" x2="0" y1="0" y2="1"><stop offset="0" stop-color="#75605a"/><stop offset="0.25" stop-color="#8e7262"/><stop offset="0.55" stop-color="#a48470"/><stop offset="1" stop-color="#ae8d76"/></linearGradient>
<linearGradient id="vwood" x1="0" x2="0" y1="0" y2="1"><stop offset="0" stop-color="#5a3e2c"/><stop offset="1" stop-color="#6b4a34"/></linearGradient>
</defs>
<rect width="500" height="281" fill="#080706"/>
<!-- left wall -->
<path d="M0 0H81L219 27V186L0 197Z" fill="url(#vwall)"/>
<path d="M81 0H100L221 21V28L219 27Z" fill="#3e2b20"/>
<!-- pillar -->
<rect x="219" y="34" width="35" height="24" fill="#121212"/>
<rect x="224" y="36" width="28" height="2" fill="#aaa"/>
<circle cx="232" cy="50" r="2" fill="#e8e8e8"/>
<rect x="219" y="58" width="33" height="131" fill="url(#vwood)"/>
<rect x="252" y="40" width="5" height="150" fill="#2a2420"/>
<!-- right wall -->
<path d="M256 32H500V43H256Z" fill="#4a3426"/>
<path d="M258 43H500V186H258Z" fill="url(#vwall2)"/>
<!-- skirts -->
<path d="M0 197L219 186H500V205L0 217Z" fill="#4d4440"/>
<!-- floor -->
<path d="M0 217L220 208L500 203V281H0Z" fill="url(#vfloor)"/>
<path d="M421 281L500 252V264L456 281Z" fill="#bfa2a3"/>
<path d="M0 219L13 217V227L0 229Z" fill="#3a302c"/>
<!-- platform -->
<path d="M86 201L220 196L275 201V207L88 214Z" fill="#3b322e"/>
<path d="M88 207V215M92 206V214" stroke="#2a2220" stroke-width="1.2"/>
<!-- left screen -->
<path d="M26 8L189 45L190 176L26 177Z" fill="#0d0d0d" stroke="#9a9a9a" stroke-width="0.9"/>
<clipPath id="vc1"><path d="M36.5 20L184 53V166L36.5 167.5Z"/></clipPath>
<g clip-path="url(#vc1)">
<rect x="30" y="15" width="160" height="160" fill="url(#vscr)"/>
<path d="M169 90L36 55V88L150 96Z" fill="url(#vray)" opacity="0.7"/>
<path d="M169 104L36 100V135L150 118Z" fill="url(#vray)" opacity="0.75"/>
<path d="M36 91L169 98L36 99Z" fill="#061640" opacity="0.7"/>
<ellipse cx="160" cy="104" rx="28" ry="36" fill="url(#vglow)"/>
<path d="M134 86L169 80V132L134 126Z" fill="#7ed6ff" opacity="0.45"/>
<path d="M134 86L169 80V132L134 126ZM150 83V129M134 106L169 106" fill="none" stroke="#aee8ff" stroke-width="0.9" opacity="0.85"/>
<rect x="36" y="162" width="150" height="6" fill="#0b0f1a"/>
</g>
<!-- right screen -->
<path d="M304 61L454 63.5L454 167.5L304 166Z" fill="#0d0d0d" stroke="#9a9a9a" stroke-width="0.9"/>
<clipPath id="vc2"><path d="M310.6 66L447 67.5V161H310.6Z"/></clipPath>
<g clip-path="url(#vc2)">
<rect x="305" y="62" width="145" height="102" fill="url(#vscr)"/>
<path d="M429 112L311 86V112L410 116Z" fill="url(#vray)" opacity="0.7"/>
<path d="M429 120L311 118V150L410 132Z" fill="url(#vray)" opacity="0.75"/>
<path d="M311 113L429 116L311 118Z" fill="#061640" opacity="0.7"/>
<ellipse cx="420" cy="116" rx="26" ry="32" fill="url(#vglow)"/>
<path d="M392 102L429 96V136L392 131Z" fill="#7ed6ff" opacity="0.45"/>
<path d="M392 102L429 96V136L392 131ZM408 99V133M392 116L429 116" fill="none" stroke="#aee8ff" stroke-width="0.9" opacity="0.85"/>
<rect x="310" y="156" width="140" height="5" fill="#0b0f1a"/>
</g>
<!-- podium -->
<path d="M318 172H348V227L318 229Z" fill="#c08c62"/>
<path d="M318 171H350V174H318Z" fill="#3a2e28"/>
<path d="M318 183H348M318 194H348M318 205H348M318 216H348" stroke="#a4724c" stroke-width="0.8"/>
<!-- person -->
<path d="M277 121C274 128 273 150 274 170L275 189H322L321 160C326 150 327 140 323 131L312 121L298 119Z" fill="#151925"/>
<path d="M312 126L327 148L331 136L325 126Z" fill="#151925"/>
<path d="M275 188L271 258L281 260L292 205L299 259L310 260L314 188Z" fill="#2b2e3a"/>
<path d="M265 259L281 257L282 270L263 268Z" fill="#4c4a4a"/>
<path d="M298 258L311 258L312 271L299 270Z" fill="#4c4a4a"/>
<ellipse cx="298.5" cy="106" rx="7.5" ry="10" fill="#b08468"/>
<path d="M290 103C289 92 308 91 307 103L306 98C302 95 295 95 291 99Z" fill="#1a1410"/>
<path d="M261 152L287 160L290 173L268 168Z" fill="#3c6a90" stroke="#555" stroke-width="0.8"/>
<path d="M318 138L326 128L331 130L323 142Z" fill="#b08468"/>
</svg>
</div>
</div>
<div id="bottom">
<div class="a" style="left:0;top:989px;width:1920px;height:29px;background:#e6e6e6;border-top:1px solid #c6c6c6;border-bottom:1px solid #c6c6c6"></div>
<div class="a" style="left:1899px;top:203px;width:21px;height:786px;background:#e6e6e6"></div>
<div class="a" style="left:1898px;top:223px;width:1px;height:766px;background:#9b9b9b"></div>
<div class="a" style="left:0;top:988px;width:1899px;height:1px;background:#9b9b9b"></div>
<div class="a" style="left:1902px;top:205px;width:15px;height:16px;background:#fff;border:1px solid #c6c6c6"></div>
<div class="a" style="left:1906px;top:210px;width:0;height:0;border-left:4px solid transparent;border-right:4px solid transparent;border-bottom:4px solid #666"></div>
<div class="a" style="left:1902px;top:220px;width:15px;height:245px;background:#fff;border:1px solid #c6c6c6"></div>
<div class="a" style="left:1903px;top:465px;width:13px;height:510px;background:#dedede"></div>
<div class="a" style="left:1902px;top:975px;width:15px;height:14px;background:#fff;border:1px solid #c6c6c6"></div>
<div class="a" style="left:1906px;top:980px;width:0;height:0;border-left:4px solid transparent;border-right:4px solid transparent;border-top:4px solid #666"></div>
<div class="a" style="left:27px;top:998px;width:0;height:0;border-top:4px solid transparent;border-bottom:4px solid transparent;border-right:4px solid #c0c0c0"></div>
<div class="a" style="left:56px;top:998px;width:0;height:0;border-top:4px solid transparent;border-bottom:4px solid transparent;border-left:4px solid #217346"></div>
<div class="a" style="left:100px;top:996px;width:1px;height:17px;background:#a8a8a8"></div>
<div class="a tab" style="left:113px">Начало</div>
<div class="a" style="left:172px;top:989px;width:105px;height:26px;background:#fff"></div>
<div class="a" style="left:172px;top:1012px;width:105px;height:3px;background:#217346"></div>
<div class="a tab" style="left:184px;font-weight:bold;color:#217346">1. Сложение</div>
<div class="a" style="left:421px;top:993px;width:1px;height:19px;background:#a8a8a8"></div>
<div class="a tab" style="left:292px">2. Автозаполнение</div>
<div class="a" style="left:534px;top:993px;width:1px;height:19px;background:#a8a8a8"></div>
<div class="a tab" style="left:436px">3. Разделение</div>
<div class="a" style="left:696px;top:993px;width:1px;height:19px;background:#a8a8a8"></div>
<div class="a tab" style="left:550px">4. Транспонирование</div>
<div class="a" style="left:874px;top:993px;width:1px;height:19px;background:#a8a8a8"></div>
<div class="a tab" style="left:713px">5. Сортировка и фильтр</div>
<div class="a" style="left:971px;top:993px;width:1px;height:19px;background:#a8a8a8"></div>
<div class="a tab" style="left:889px">6. Таблицы</div>
<div class="a" style="left:1170px;top:993px;width:1px;height:19px;background:#a8a8a8"></div>
<div class="a tab" style="left:989px">7. Раскрывающиеся списки</div>
<div class="a" style="left:1255px;top:993px;width:1px;height:19px;background:#a8a8a8"></div>
<div class="a tab" style="left:1184px">8. Анализ</div>
<div class="a" style="left:1370px;top:993px;width:1px;height:19px;background:#a8a8a8"></div>
<div class="a tab" style="left:1270px">9. Диаграммы</div>
<div class="a" style="left:1534px;top:993px;width:1px;height:19px;background:#a8a8a8"></div>
<div class="a tab" style="left:1388px">10. Сводные таблицы</div>
<div class="a" style="left:1534px;top:993px;width:1px;height:19px;background:#a8a8a8"></div>
<svg class="a" style="left:1545px;top:1004px" width="12" height="4"><rect x="0" y="0.5" width="2.5" height="2.5" fill="#0b5a22"/><rect x="4" y="0.5" width="2.5" height="2.5" fill="#0b5a22"/><rect x="8" y="0.5" width="2.5" height="2.5" fill="#0b5a22"/></svg>
<svg class="a" style="left:1568.5px;top:994.5px" width="17" height="17"><circle cx="8.5" cy="8.5" r="7.5" fill="none" stroke="#666" stroke-width="1.2"/><path d="M8.5 4.5v8M4.5 8.5h8" stroke="#666" stroke-width="2"/></svg>
<svg class="a" style="left:1605px;top:997px" width="3" height="12"><rect x="0" y="0" width="2" height="2" fill="#aaa"/><rect x="0" y="5" width="2" height="2" fill="#aaa"/><rect x="0" y="10" width="2" height="2" fill="#aaa"/></svg>
<div class="a" style="left:1622px;top:996px;width:280px;height:16px;background:#dedede"></div>
<div class="a" style="left:1622px;top:996px;width:16px;height:16px;background:#fff;border:1px solid #c6c6c6"></div>
<div class="a" style="left:1627px;top:1000px;width:0;height:0;border-top:4px solid transparent;border-bottom:4px solid transparent;border-right:4px solid #555"></div>
<div class="a" style="left:1637px;top:996px;width:228px;height:16px;background:#fff;border:1px solid #c6c6c6"></div>
<div class="a" style="left:1886px;top:996px;width:16px;height:16px;background:#fff;border:1px solid #c6c6c6"></div>
<div class="a" style="left:1892px;top:1000px;width:0;height:0;border-top:4px solid transparent;border-bottom:4px solid transparent;border-left:4px solid #555"></div>
<div class="a" style="left:0;top:1018px;width:1920px;height:21px;background:#f2f2f2"></div><div class="a" style="left:0;top:1039px;width:1920px;height:1px;background:#fbfbfb"></div>
<div class="a" style="left:1634px;top:1018px;width:38px;height:21px;background:#c6c6c6"></div>
<svg class="a" style="left:1646px;top:1021px" width="14" height="14" viewBox="0 0 14 14"><rect x="0" y="0" width="14" height="14" fill="#e6e6e6"/><path d="M0.7 0.7h12.6v12.6H0.7ZM0.7 4.9h12.6M0.7 9.1h12.6M4.9 0.7v12.6M9.1 0.7v12.6" fill="none" stroke="#5a5a5a" stroke-width="1.4"/></svg>
<svg class="a" style="left:1684px;top:1021px" width="15" height="14"><path d="M0.5 0.5h14v13h-14Z" fill="none" stroke="#555"/><path d="M3.5 3.5h8v7h-8ZM5 5.5h5M5 7.5h5" fill="none" stroke="#555"/></svg>
<svg class="a" style="left:1722px;top:1021px" width="15" height="14"><path d="M0.5 0.5h14v13h-14ZM0.5 7.5h9v-7M4.5 0.5v4" fill="none" stroke="#555"/></svg>
<div class="a" style="left:1753px;top:1027px;width:8px;height:2px;background:#555"></div>
<div class="a" style="left:1763px;top:1028px;width:100px;height:1px;background:#a0a0a0"></div>
<div class="a" style="left:1811px;top:1022px;width:4px;height:12px;background:#666"></div>
<div class="a" style="left:1866px;top:1027px;width:9px;height:2px;background:#555"></div>
<div class="a" style="left:1869.5px;top:1024px;width:2px;height:9px;background:#555"></div>
<div class="a" style="left:1885px;top:1021px;font-size:12px;color:#333">100%</div>
</div>
</body></html>
